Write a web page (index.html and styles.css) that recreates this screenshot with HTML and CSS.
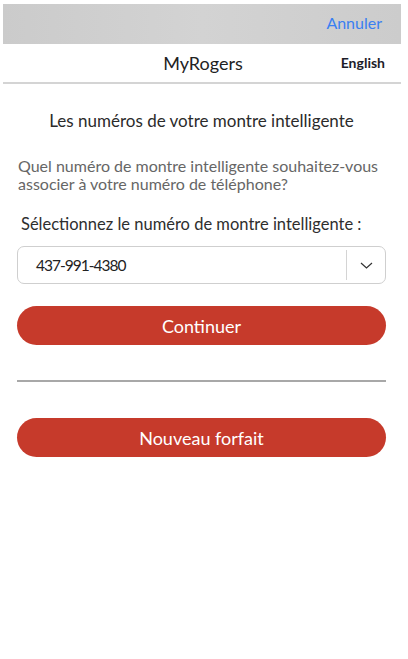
FILE: index.html
```
<html>
<head>
    <title>MyRogers</title>
    <link rel="stylesheet" href="styles.css">
</head>
<body>
<div class="screen">
    <div class="topBar">
        <span class="cancel">Annuler</span>
    </div>
    <div class="header">
        <span class="brand">MyRogers</span>
        <span class="lang">English</span>
    </div>

    <div class="content">
        <h1>Les numéros de votre montre intelligente</h1>
        <p class="intro">Quel numéro de montre intelligente souhaitez-vous associer à votre numéro de téléphone?</p>

        <label class="fieldLabel">Sélectionnez le numéro de montre intelligente :</label>
        <div class="selectBox">
            <span class="selectValue">437-991-4380</span>
            <span class="selectArrow">
                <svg width="13" height="7" viewBox="0 0 13 7"><path d="M1 1l5.5 5 5.5-5" fill="none" stroke="#333" stroke-width="1.2"/></svg>
            </span>
        </div>

        <button class="redButton continue">Continuer</button>
        <hr class="divider">
        <button class="redButton">Nouveau forfait</button>
    </div>
</div>
</body>
</html>
```
FILE: styles.css
```
body{
    margin:0;
    background-color:#fff;
    font-family: Lato, "Noto Sans", sans-serif;
}

.screen{
    margin:4px 7px 0 3px;
}

.topBar{
    height:40px;
    background: linear-gradient(90deg, #cbcbcb, #d3d3d3 50%, #cccccc);
    display:flex;
    justify-content:flex-end;
    align-items:center;
}

.cancel{
    color:#3a7ff2;
    font-size:16px;
    margin-right:19px;
    margin-top:-3px;
}

.header{
    height:38px;
    border-bottom:2px solid #d4d4d4;
    position:relative;
    display:flex;
    justify-content:center;
    align-items:center;
}

.brand{
    font-size:18px;
    color:#222;
    margin-left:2px;
}

.lang{
    position:absolute;
    right:16px;
    top:10px;
    font-size:14px;
    font-weight:bold;
    color:#1c1c28;
}

.content{
    padding:0 15px 0 14px;
}

h1{
    font-size:17px;
    font-weight:normal;
    color:#2b2b2b;
    text-align:center;
    margin:26px 0 0 0;
}

.intro{
    font-size:16px;
    line-height:18px;
    color:#666;
    margin:26px 0 0 1px;
}

.fieldLabel{
    display:block;
    font-size:16.5px;
    color:#2e2e2e;
    margin:21px 0 0 4px;
}

.selectBox{
    height:36px;
    margin-top:12px;
    border:1px solid #cfcfcf;
    border-radius:7px;
    display:flex;
    align-items:center;
}

.selectValue{
    flex:1;
    font-size:15.5px;
    letter-spacing:-1px;
    color:#222;
    padding-left:18px;
}

.selectArrow{
    width:38px;
    height:30px;
    border-left:1px solid #d4d4d4;
    display:flex;
    justify-content:center;
    align-items:center;
}

.redButton{
    display:block;
    width:100%;
    height:39px;
    border:none;
    border-radius:20px;
    background-color:#c63a2b;
    color:#fff;
    font-family: Lato, "Noto Sans", sans-serif;
    font-size:18px;
}

.continue{
    margin-top:22px;
}

.divider{
    border:none;
    border-top:2px solid #a8a8a8;
    margin:35px 0 36px 0;
}
```
